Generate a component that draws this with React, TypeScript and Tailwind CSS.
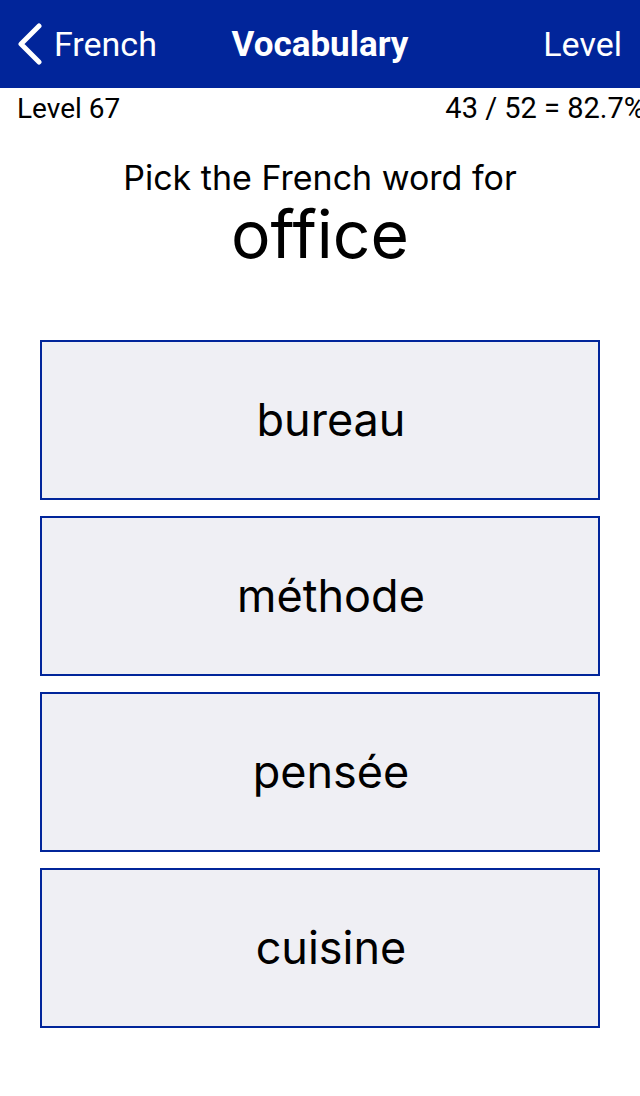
const choices = ['bureau', 'méthode', 'pensée', 'cuisine'];

function Chevron() {
  return (
    <svg width="28" height="42" viewBox="0 0 28 42" fill="none">
      <path d="M24 3 L6 21 L24 39" stroke="white" strokeWidth="5" strokeLinecap="round" strokeLinejoin="round" />
    </svg>
  );
}

function NavBar() {
  return (
    <header className="h-[88px] bg-[#01259a] text-white flex items-center relative font-['Roboto',sans-serif]">
      <div className="flex items-center pl-[15px] gap-[11px]">
        <Chevron />
        <span className="text-[34px] leading-none">French</span>
      </div>
      <span className="absolute left-1/2 -translate-x-1/2 text-[35px] font-bold leading-none">Vocabulary</span>
      <span className="ml-auto pr-[18px] text-[34px] leading-none">Level</span>
    </header>
  );
}

export default function App() {
  return (
    <div className="w-[640px] h-[1096px] bg-white overflow-hidden font-['Roboto',sans-serif]">
      <NavBar />
      <div className="flex justify-between pl-[17px] h-[42px] items-center text-[28px] text-black whitespace-nowrap">
        <span>Level 67</span>
        <span className="shrink-0 text-[29px] -mr-[5px]">43 / 52 = 82.7%</span>
      </div>
      <div className="flex flex-col items-center text-black font-['Inter',sans-serif]">
        <p className="text-[34px] leading-none mt-[31px]">Pick the French word for</p>
        <p className="text-[66px] leading-none mt-[6px]">office</p>
      </div>
      <div className="flex flex-col gap-[16px] px-[40px] mt-[73px] font-['Inter',sans-serif]">
        {choices.map((word) => (
          <button
            key={word}
            className="h-[160px] border-2 border-[#01259a] bg-[#efeff4] flex items-center justify-center pl-[22px] text-[45px] text-black"
          >
            {word}
          </button>
        ))}
      </div>
    </div>
  );
}
